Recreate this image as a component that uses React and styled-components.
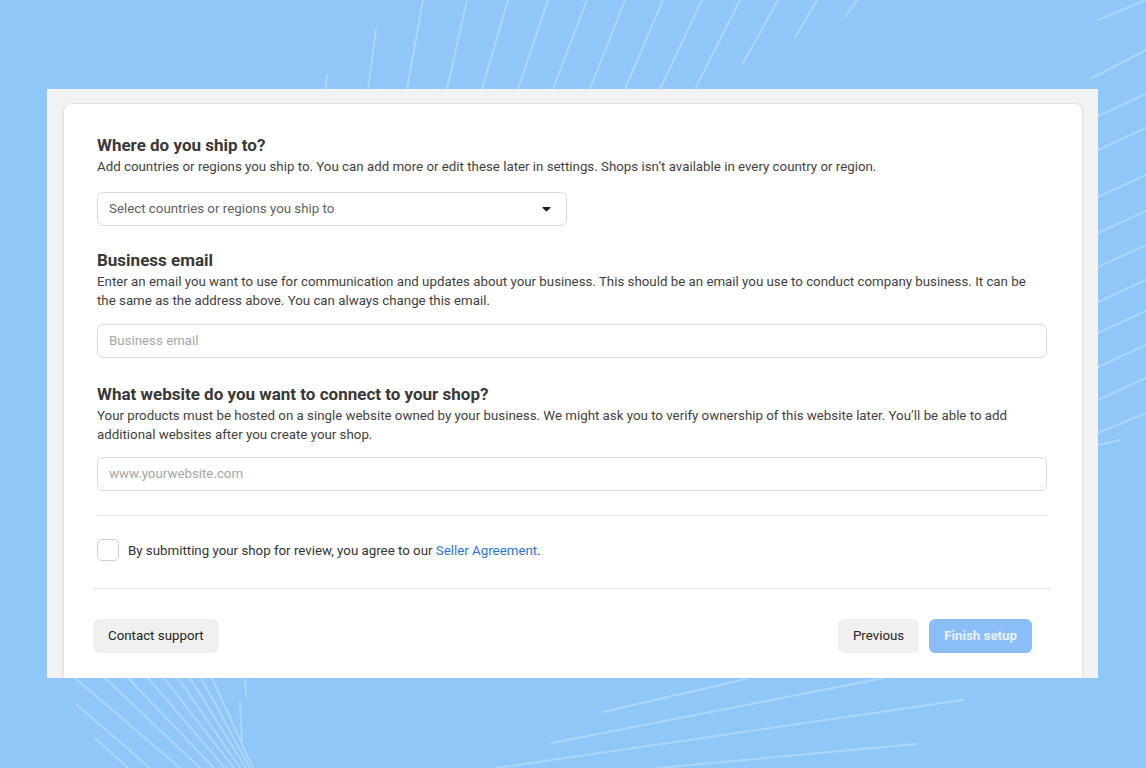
import React from "react";
import styled, { createGlobalStyle } from "styled-components";

const Global = createGlobalStyle`
  html, body { margin: 0; padding: 0; }
  body { font-family: Roboto, "Liberation Sans", Arial, sans-serif; -webkit-font-smoothing: antialiased; }
  * { box-sizing: border-box; }
`;

const Page = styled.div`
  position: relative;
  width: 1146px;
  height: 768px;
  overflow: hidden;
  background: #8ec7f8;
  padding: 89px 0 0 47px;
`;

const Deco = styled.svg`
  position: absolute;
  inset: 0;
  width: 1146px;
  height: 768px;
  pointer-events: none;
`;

const Frame = styled.div`
  position: relative;
  z-index: 1;
  width: 1051px;
  height: 589px;
  background: #f2f2f2;
  padding: 14px 15px 0 16px;
  overflow: hidden;
  display: flex;
`;

const Card = styled.div`
  flex: 1;
  height: 600px;
  background: #fff;
  border: 1px solid #e2e2e2;
  border-radius: 9px 9px 0 0;
  box-shadow: 0 1px 3px rgba(0, 0, 0, 0.06);
  padding: 31px 35px 0 33px;
  display: flex;
  flex-direction: column;
`;

const Section = styled.section`
  display: flex;
  flex-direction: column;
  margin-bottom: ${(p) => p.$mb || 0}px;
`;

const Title = styled.h2`
  margin: 0 0 1px;
  font-size: 17px;
  line-height: 21px;
  font-weight: 700;
  color: #383838;
`;

const Desc = styled.p`
  margin: 0 0 ${(p) => p.$mb || 15}px;
  font-size: 13.3px;
  line-height: 19.5px;
  color: #3f3f3f;
`;

const Field = styled.div`
  position: relative;
  width: ${(p) => p.$w || "100%"};
  height: 34px;
  border: 1px solid #dadada;
  border-radius: 6px;
  background: #fff;
  display: flex;
  align-items: center;
  padding: 0 11px;
  font-size: 13.3px;
  color: ${(p) => (p.$dark ? "#5f5f5f" : "#a6a6a6")};
`;

const FieldText = styled.span`
  flex: 1;
`;

const Caret = styled.svg`
  width: 9px;
  height: 6px;
  margin-right: 4px;
`;

const Divider = styled.hr`
  border: 0;
  border-top: 1px solid #e2e2e2;
  margin: ${(p) => p.$m || "0"};
`;

const AgreeRow = styled.label`
  display: flex;
  align-items: center;
  gap: 9px;
  height: 72px;
  padding-bottom: 3px;
  font-size: 13.3px;
  color: #333;
`;

const Box = styled.span`
  width: 22px;
  height: 22px;
  border: 1px solid #cfcfcf;
  border-radius: 5px;
  background: #fff;
`;

const Link = styled.a`
  color: #2a74d8;
  text-decoration: none;
`;

const Footer = styled.div`
  display: flex;
  align-items: center;
  margin: 0 -4px;
  padding: 30px 19px 0 0;
  gap: 10px;
`;

const Button = styled.button`
  height: 34px;
  border: 0;
  border-radius: 6px;
  padding: 0 15px;
  font-family: inherit;
  font-size: 13.3px;
  font-weight: ${(p) => (p.$primary ? 700 : 400)};
  background: ${(p) => (p.$primary ? "#8bbdf6" : "#f0f0f0")};
  color: ${(p) => (p.$primary ? "#e9f2fd" : "#262626")};
  cursor: pointer;
`;

const Spacer = styled.div`
  flex: 1;
`;

const topLines = [
  [326, 89, 327, 75],
  [368, 89, 376, 29],
  [407, 89, 423, 0],
  [447, 89, 467, 0],
  [482, 89, 508, 0],
  [518, 89, 548, 0],
  [553, 89, 587, 0],
  [590, 89, 625, 0],
  [625, 89, 663, 0],
  [660, 89, 702, 0],
  [695, 89, 740, 0],
  [743, 63, 778, 0],
  [795, 38, 817, 0],
  [845, 17, 857, 0],
];

const rightLines = [
  [1098, 20, 1146, 0],
  [1092, 78, 1146, 50],
  [1098, 116, 1146, 94],
  [1098, 150, 1146, 128],
  [1098, 197, 1146, 175],
  [1098, 233, 1146, 211],
  [1098, 267, 1146, 245],
  [1098, 302, 1146, 280],
  [1098, 333, 1146, 311],
  [1098, 367, 1146, 345],
  [1098, 400, 1146, 378],
  [1098, 433, 1146, 413],
  [1098, 445, 1121, 440],
];

const bottomLines = [
  [75, 678, 180, 768],
  [105, 678, 200, 768],
  [128, 678, 214, 768],
  [148, 678, 225, 768],
  [164, 678, 234, 768],
  [178, 678, 240, 768],
  [190, 678, 246, 768],
  [201, 678, 250, 768],
  [212, 678, 253, 768],
  [77, 705, 150, 768],
  [95, 738, 128, 768],
  [245, 678, 246, 695],
  [240, 702, 242, 740],
  [603, 712, 746, 679],
  [552, 743, 884, 678],
  [497, 768, 963, 700],
  [658, 768, 917, 744],
];

const Lines = () => (
  <Deco viewBox="0 0 1146 768">
    {[...topLines, ...rightLines, ...bottomLines].map(([x1, y1, x2, y2], i) => (
      <line
        key={i}
        x1={x1}
        y1={y1}
        x2={x2}
        y2={y2}
        stroke="rgba(255,255,255,0.28)"
        strokeWidth="2"
        strokeLinecap="round"
      />
    ))}
  </Deco>
);

export default function App() {
  return (
    <>
      <Global />
      <Page>
        <Lines />
        <Frame>
          <Card>
            <Section $mb={24}>
              <Title>Where do you ship to?</Title>
              <Desc $mb={15}>
                Add countries or regions you ship to. You can add more or edit these later in
                settings. Shops isn’t available in every country or region.
              </Desc>
              <Field $w="470px" $dark>
                <FieldText>Select countries or regions you ship to</FieldText>
                <Caret viewBox="0 0 10 7">
                  <path d="M1 1.2h8c.6 0 .9.7.5 1.1L5.5 6.2c-.3.3-.7.3-1 0L.5 2.3C.1 1.9.4 1.2 1 1.2z" fill="#1c1c1c" />
                </Caret>
              </Field>
            </Section>
            <Section $mb={26}>
              <Title>Business email</Title>
              <Desc $mb={13}>
                Enter an email you want to use for communication and updates about your business.
                This should be an email you use to conduct company business. It can be the same as
                the address above. You can always change this email.
              </Desc>
              <Field>
                <FieldText>Business email</FieldText>
              </Field>
            </Section>
            <Section $mb={24}>
              <Title>What website do you want to connect to your shop?</Title>
              <Desc $mb={12}>
                Your products must be hosted on a single website owned by your business. We might
                ask you to verify ownership of this website later. You’ll be able to add additional
                websites after you create your shop.
              </Desc>
              <Field>
                <FieldText>www.yourwebsite.com</FieldText>
              </Field>
            </Section>
            <Divider />
            <AgreeRow>
              <Box />
              <span>
                By submitting your shop for review, you agree to our{" "}
                <Link href="#">Seller Agreement</Link>.
              </span>
            </AgreeRow>
            <Divider $m="0 -4px" />
            <Footer>
              <Button>Contact support</Button>
              <Spacer />
              <Button>Previous</Button>
              <Button $primary>Finish setup</Button>
            </Footer>
          </Card>
        </Frame>
      </Page>
    </>
  );
}
